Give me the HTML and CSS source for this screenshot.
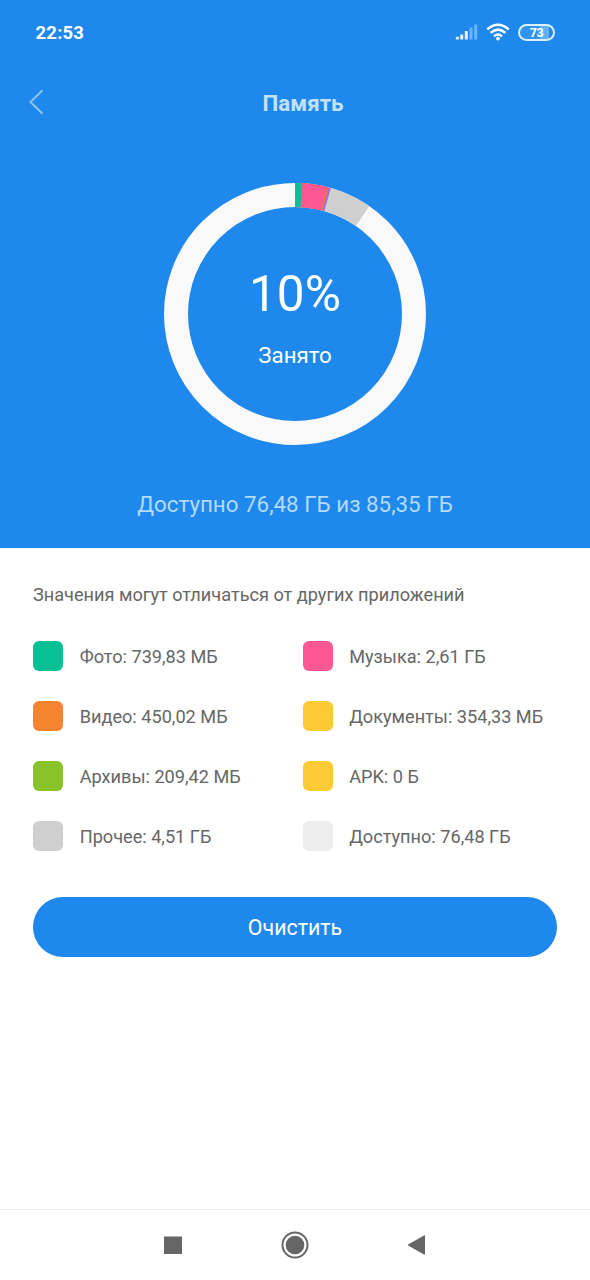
FILE: index.html
```html
<!DOCTYPE html>
<html lang="ru">
<head>
<meta charset="utf-8">
<title>Память</title>
<link rel="stylesheet" href="styles.css">
</head>
<body>
<div class="screen">
  <section class="hero">
    <div class="status">
      <span class="clock">22:53</span>
      <div class="status-icons">
        <svg class="signal" width="23" height="17" viewBox="0 0 23 17">
          <g fill="#e6f6ff"><rect x=".8" y="12.800" width="3" height="2.700"/><rect x="5.200" y="10.500" width="3" height="5"/><rect x="9.800" y="7" width="3" height="8.500"/></g>
          <g fill="#6db6f6"><rect x="14.500" y="3.500" width="3" height="12"/><rect x="19.200" y=".5" width="3" height="15"/></g>
        </svg>
        <svg class="wifi" width="24" height="18" viewBox="0 0 24 18">
          <g fill="none" stroke="#fff" stroke-width="2.500"><path d="M1.300 6.400Q12-3 22.700 6.400"/><path d="M4.600 9.900Q12 3.300 19.400 9.900"/><path d="M8 13.300Q12 9.600 16 13.300"/></g>
          <circle cx="12" cy="15.600" r="1.900" fill="#fff"/>
        </svg>
        <span class="battery">73</span>
      </div>
    </div>
    <header class="header">
      <svg class="back" width="16" height="26" viewBox="0 0 16 26"><path d="M14.500 1.300 2.500 13 14.500 24.700" fill="none" stroke="#8bc4f8" stroke-width="2"/></svg>
      <h1 class="title">Память</h1>
    </header>
    <div class="chart">
      <svg class="ring" width="262" height="262" viewBox="0 0 262 262">
        <g fill="none" stroke-width="24" transform="rotate(-90 131 131)">
          <circle cx="131" cy="131" r="119" stroke="#f9f9f9"/>
          <circle cx="131" cy="131" r="119" pathLength="360" stroke="#cfcfcf" stroke-dasharray="34.600 400"/>
          <circle cx="131" cy="131" r="119" pathLength="360" stroke="#a56be0" stroke-dasharray="15.900 400"/>
          <circle cx="131" cy="131" r="119" pathLength="360" stroke="#e8783c" stroke-dasharray="14.900 400"/>
          <circle cx="131" cy="131" r="119" pathLength="360" stroke="#ff5792" stroke-dasharray="13.900 400"/>
          <circle cx="131" cy="131" r="119" pathLength="360" stroke="#05c194" stroke-dasharray="3 400"/>
        </g>
      </svg>
      <div class="chart-label">
        <span class="percent">10%</span>
        <span class="used">Занято</span>
      </div>
    </div>
    <p class="available">Доступно 76,48 ГБ из 85,35 ГБ</p>
  </section>
  <main class="details">
    <p class="note">Значения могут отличаться от других приложений</p>
    <ul class="legend">
      <li class="item"><i class="swatch green"></i><span>Фото: 739,83 МБ</span></li>
      <li class="item"><i class="swatch pink"></i><span>Музыка: 2,61 ГБ</span></li>
      <li class="item"><i class="swatch orange"></i><span>Видео: 450,02 МБ</span></li>
      <li class="item"><i class="swatch yellow"></i><span>Документы: 354,33 МБ</span></li>
      <li class="item"><i class="swatch lime"></i><span>Архивы: 209,42 МБ</span></li>
      <li class="item"><i class="swatch yellow"></i><span>APK: 0 Б</span></li>
      <li class="item"><i class="swatch gray"></i><span>Прочее: 4,51 ГБ</span></li>
      <li class="item"><i class="swatch light"></i><span>Доступно: 76,48 ГБ</span></li>
    </ul>
    <button class="clean">Очистить</button>
  </main>
  <nav class="navbar">
    <svg width="28" height="28" viewBox="0 0 28 28"><rect x="5" y="5.500" width="18" height="17.500" fill="#666"/></svg>
    <svg width="28" height="28" viewBox="0 0 28 28"><circle cx="14" cy="14" r="12.500" fill="none" stroke="#666" stroke-width="2"/><circle cx="14" cy="14" r="9.300" fill="#666"/></svg>
    <svg width="28" height="28" viewBox="0 0 28 28"><path d="M22 5v18q0 1-1 .5L5.500 14.700q-1.200-.7 0-1.400L21 4.500q1-.5 1 .5z" fill="#666"/></svg>
  </nav>
</div>
</body>
</html>
```
FILE: styles.css
```css
* { box-sizing: border-box; margin: 0; padding: 0; }

body { background: #fff; font-family: Roboto, "Noto Sans", sans-serif; }

.screen { width: 590px; height: 1280px; display: flex; flex-direction: column; }

.hero {
  height: 547.5px;
  background: #1f88ec;
  color: #fff;
  display: flex;
  flex-direction: column;
}

.status {
  height: 64px;
  padding: 0 35px;
  display: flex;
  align-items: center;
  justify-content: space-between;
}
.clock { padding: 2px 0 0 .5px; font-size: 18.5px; font-weight: 700; line-height: 24px; letter-spacing: .2px; }
.status-icons { display: flex; align-items: center; gap: 8px; }
.battery {
  width: 37px;
  height: 17px;
  border: 2px solid #d9f0ff;
  border-radius: 9px;
  background: linear-gradient(90deg, #3394ef 0 60%, #61b0f5 60% 88%, #1f88ec 88%);
  font-size: 12.5px;
  font-weight: 700;
  line-height: 14px;
  letter-spacing: -.3px;
  text-align: center;
}

.header {
  height: 76px;
  padding: 0 28px;
  display: grid;
  grid-template-columns: 24px 1fr 8px;
  align-items: center;
}
.title { padding-top: 2px; color: #c4e1fb; font-size: 22.3px; font-weight: 700; line-height: 28px; text-align: center; }

.chart { margin-top: 42.5px; height: 262px; display: grid; place-items: center; }
.ring, .chart-label { grid-area: 1 / 1; }
.chart-label { display: flex; flex-direction: column; align-items: center; gap: 19px; padding-top: 8px; }
.percent { font-size: 49.5px; line-height: 56px; }
.used { font-size: 22.3px; line-height: 28px; }

.available { margin-top: 45px; color: #b3dafb; font-size: 22.35px; line-height: 28px; text-align: center; }

.details { flex: 1; padding: 35px 33px 0; color: #666; font-size: 18.15px; }
.note { line-height: 24px; }
.legend {
  margin-top: 34px;
  list-style: none;
  display: grid;
  grid-template-columns: 269.5px 1fr;
  row-gap: 30px;
}
.item { height: 30px; display: flex; align-items: center; gap: 16.700px; line-height: 24px; white-space: nowrap; }
.item span { padding-top: 3px; }
.swatch { width: 30px; height: 30px; border-radius: 6px; }
.green { background: #05c194; }
.pink { background: #ff5792; }
.orange { background: #f5832f; }
.yellow { background: #fdca36; }
.lime { background: #87c22a; }
.gray { background: #cfcfcf; }
.light { background: #ededed; }

.clean {
  display: block;
  width: 100%;
  height: 60px;
  margin-top: 46px;
  padding-top: 1px;
  border: 0;
  border-radius: 30px;
  background: #1f88ec;
  color: #fff;
  font: 21.4px Roboto, "Noto Sans", sans-serif;
}

.navbar {
  height: 71px;
  padding: 0 1px 1px 0;
  border-top: 1px solid #ededed;
  display: flex;
  align-items: center;
  justify-content: center;
  gap: 94px;
}
```
